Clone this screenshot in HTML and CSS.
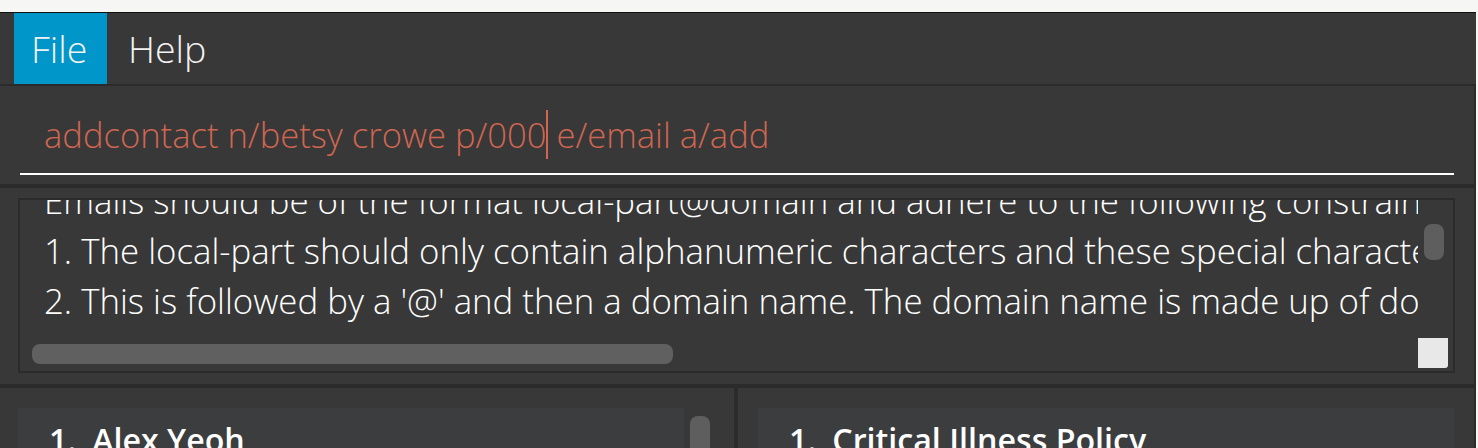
FILE: index.html
```html
<!DOCTYPE html>
<html lang="en">
<head>
<meta charset="utf-8">
<title>Address Book</title>
<link rel="stylesheet" href="styles.css">
</head>
<body>
<div class="title-strip"></div>
<div class="window">
  <nav class="menubar">
    <div class="menu-item active">File</div>
    <div class="menu-item">Help</div>
  </nav>
  <section class="command-box">
    <div class="command-field">addcontact n/betsy crowe p/000<span class="caret"></span> e/email a/add</div>
  </section>
  <section class="result-box">
    <div class="result-area">
      <div class="result-viewport">
        <div class="result-text">
          <p>Emails should be of the format local-part@domain and adhere to the following constraints:</p>
          <p>1. The local-part should only contain alphanumeric characters and these special characters, excluding the parentheses, (+_.-).</p>
          <p>2. This is followed by a '@' and then a domain name. The domain name is made up of domain labels separated by periods.</p>
        </div>
      </div>
      <div class="vbar"><div class="vthumb"></div></div>
      <div class="hbar"><div class="hthumb"></div></div>
      <div class="corner"></div>
    </div>
  </section>
  <section class="lists">
    <div class="list-panel left">
      <div class="card">
        <span class="card-index">1.</span>
        <span class="card-name">Alex Yeoh</span>
      </div>
      <div class="list-scroll"><div class="list-thumb"></div></div>
    </div>
    <div class="list-panel right">
      <div class="card">
        <span class="card-index">1.</span>
        <span class="card-name">Critical Illness Policy</span>
      </div>
    </div>
  </section>
</div>
</body>
</html>
```

FILE: styles.css
```css
* { box-sizing: border-box; }

html, body {
  margin: 0;
  padding: 0;
  height: 448px;
  overflow: hidden;
}

body {
  background: #f6f6f4;
  font-family: "Open Sans", "Liberation Sans", sans-serif;
}

.title-strip {
  height: 12px;
}

.window {
  width: 1476px;
  height: 436px;
  border-top: 1px solid #111111;
  background: #2b2b2b;
  display: flex;
  flex-direction: column;
  overflow: hidden;
}

/* ---------- menu ---------- */
.menubar {
  height: 71px;
  flex: none;
  background: #383838;
  display: flex;
  padding-left: 14px;
  margin-bottom: 2px;
}

.menu-item {
  font-size: 37.5px;
  font-weight: 300;
  color: #f2f2f2;
  line-height: 71px;
  padding: 0 17px 0 17px;
}

.menu-item.active {
  background: #0096c9;
  width: 93px;
}

.menu-item + .menu-item {
  padding-left: 21px;
}

/* ---------- command box ---------- */
.command-box {
  height: 98px;
  flex: none;
  background: #383838;
  margin-right: 2px;
  padding: 26px 20px 0 20px;
  margin-bottom: 4px;
}

.command-field {
  font-size: 34.6px;
  font-weight: 300;
  line-height: 46px;
  color: #d06651;
  padding: 0 0 14px 24px;
  border-bottom: 2px solid #ffffff;
  white-space: nowrap;
}

.caret {
  display: inline-block;
  width: 0;
  height: 49px;
  border-left: 2px solid #d06651;
  vertical-align: -11px;
  margin: -4px -1px 0 0;
}

/* ---------- result box ---------- */
.result-box {
  height: 196px;
  flex: none;
  background: #383838;
  margin-right: 2px;
  padding: 10px 19px 11px 18px;
  margin-bottom: 4px;
}

.result-area {
  height: 175px;
  border: 2px solid #2b2b2b;
  display: grid;
  grid-template-columns: 1fr 35px;
  grid-template-rows: 138px 1fr;
}

.result-viewport {
  overflow: hidden;
  padding-left: 24px;
}

.result-text {
  margin-top: -24px;
  color: #ffffff;
  font-size: 34.8px;
  font-weight: 300;
  line-height: 50px;
  white-space: nowrap;
}

.result-text p {
  margin: 0;
}

.vbar {
  padding: 24px 9px 0 6px;
}

.vthumb {
  height: 36px;
  border-radius: 8px;
  background: #5e5e5e;
}

.hbar {
  padding: 6px 0 0 12px;
}

.hthumb {
  width: 641px;
  height: 20px;
  border-radius: 8px;
  background: #606060;
}

.corner {
  width: 30px;
  height: 30px;
  background: #e8e8e8;
  border-bottom-right-radius: 3px;
}

/* ---------- lists ---------- */
.lists {
  flex: 1;
  display: flex;
  gap: 4px;
  margin-right: 2px;
}

.list-panel {
  background: #383838;
  display: flex;
  padding-top: 20px;
}

.list-panel.left {
  width: 734px;
  padding-left: 18px;
}

.list-panel.right {
  flex: 1;
  padding-left: 20px;
  padding-right: 20px;
}

.card {
  background: #3c3d3f;
  height: 80px;
  display: flex;
  align-items: flex-start;
  gap: 16px;
  padding: 10px 0 0 31px;
  color: #ffffff;
  font-size: 32.2px;
  font-weight: 600;
  line-height: normal;
}

.list-panel.left .card {
  width: 666px;
}

.list-panel.right .card {
  flex: 1;
}

.list-scroll {
  padding: 8px 0 0 6px;
}

.list-thumb {
  width: 20px;
  height: 60px;
  border-radius: 8px;
  background: #5e5e5e;
}
```
